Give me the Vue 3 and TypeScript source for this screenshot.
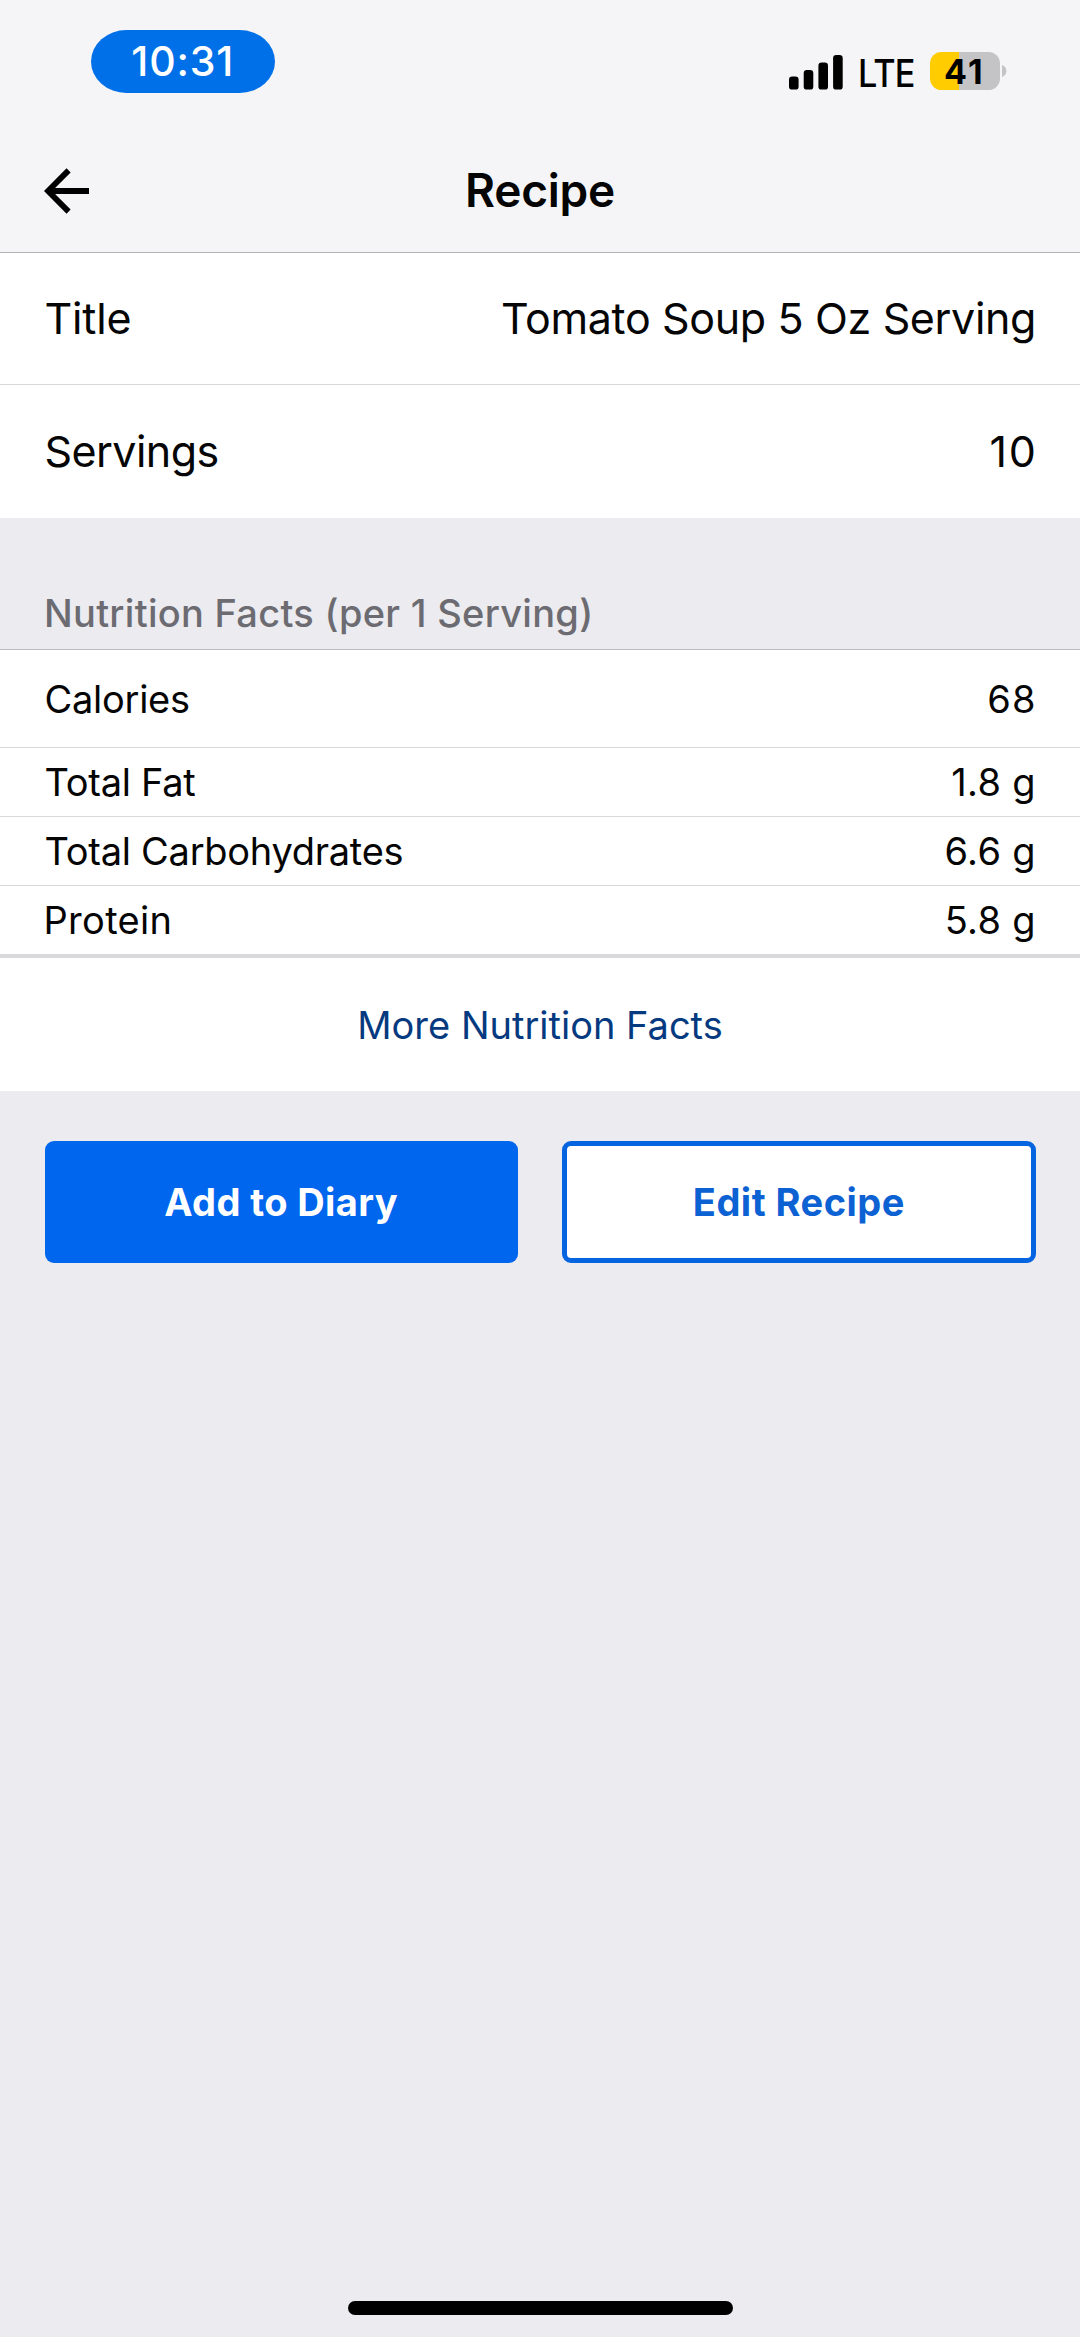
<script setup lang="ts">
interface Field {
  label: string
  value: string
  labelClass?: string
  valueClass?: string
}

const details: Field[] = [
  { label: 'Title', value: 'Tomato Soup 5 Oz Serving', labelClass: 'short' },
  { label: 'Servings', value: '10', valueClass: 'count' },
]

const nutrients: Field[] = [
  { label: 'Calories', value: '68', valueClass: 'count' },
  { label: 'Total Fat', value: '1.8 g' },
  { label: 'Total Carbohydrates', value: '6.6 g' },
  { label: 'Protein', value: '5.8 g', labelClass: 'wide' },
]
</script>

<template>
  <div class="screen">
    <header class="header">
      <div class="status">
        <div class="clock"><span>10:31</span></div>
        <div class="indicators">
          <svg class="signal" width="54" height="35" viewBox="0 0 54 35">
            <rect x="0" y="21.6" width="9.6" height="13" rx="3.2" />
            <rect x="14.7" y="15" width="9.6" height="19.6" rx="3.2" />
            <rect x="29.4" y="7.6" width="9.6" height="27" rx="3.2" />
            <rect x="44.1" y="0" width="9.6" height="34.6" rx="3.2" />
          </svg>
          <span class="network">LTE</span>
          <div class="battery"><span>41</span></div>
          <svg class="nub" width="5" height="12" viewBox="0 0 5 12">
            <path d="M0 0C2.7 1 4.4 3.2 4.4 6S2.7 11 0 12Z" fill="#c4c4c6" />
          </svg>
        </div>
      </div>
      <nav class="nav">
        <svg class="back" width="46" height="46" viewBox="0 0 46 46">
          <path d="M45 23H4M24.6 2.4L4 23L24.6 43.6" fill="none" stroke="#000" stroke-width="5.8" />
        </svg>
        <h1>Recipe</h1>
      </nav>
    </header>

    <main>
      <section class="details">
        <div v-for="f in details" :key="f.label" class="row">
          <span class="label" :class="f.labelClass">{{ f.label }}</span>
          <span class="value" :class="f.valueClass">{{ f.value }}</span>
        </div>
      </section>

      <h2>Nutrition Facts (per 1 Serving)</h2>

      <section class="nutrition">
        <div v-for="f in nutrients" :key="f.label" class="row">
          <span class="label" :class="f.labelClass">{{ f.label }}</span>
          <span class="value" :class="f.valueClass">{{ f.value }}</span>
        </div>
        <a class="more">More Nutrition Facts</a>
      </section>

      <div class="actions">
        <button class="primary">Add to Diary</button>
        <button class="secondary">Edit Recipe</button>
      </div>
    </main>

    <div class="home"></div>
  </div>
</template>

<style>
body {
  margin: 0;
  background: #ebebf0;
}
</style>

<style scoped>
.screen {
  box-sizing: border-box;
  display: flex;
  flex-direction: column;
  width: 1080px;
  height: 2337px;
  padding-bottom: 22px;
  overflow: hidden;
  background: #ebebf0;
  color: #050505;
  font-family: Inter, "Liberation Sans", sans-serif;
  white-space: nowrap;
}

.header {
  box-sizing: border-box;
  height: 253px;
  background: #f5f5f8;
  border-bottom: 1px solid #b3b3b6;
}

.status {
  display: flex;
  justify-content: space-between;
  align-items: flex-start;
  height: 129px;
  box-sizing: border-box;
  padding: 29.5px 73px 0 90.5px;
}

.clock {
  display: flex;
  justify-content: center;
  align-items: center;
  width: 184.5px;
  height: 63.5px;
  border-radius: 36px / 32px;
  background: #0070e8;
  color: #fff;
  font-size: 41px;
  font-weight: 500;
  letter-spacing: 0.85px;
}

.indicators {
  display: flex;
  align-items: center;
  height: 38px;
  margin-top: 22.5px;
}

.signal {
  display: block;
  margin-top: 3px;
}

.network {
  width: 66px;
  margin-left: 14.5px;
  color: #000;
  font-size: 38px;
  font-weight: 500;
  line-height: 38px;
  letter-spacing: -1px;
  transform: scaleX(0.9);
  transform-origin: left center;
  margin-top: 4px;
}

.battery {
  display: flex;
  align-items: center;
  justify-content: center;
  width: 70px;
  height: 38px;
  margin-left: 6px;
  border-radius: 11.5px;
  background: linear-gradient(to right, #ffcc00 0 29px, #c4c4c6 29px);
  color: #000;
  font-size: 34px;
  font-weight: 700;
  letter-spacing: 2.2px;
}

.nub {
  display: block;
  margin-left: 2.5px;
}

.nav {
  display: grid;
  grid-template-columns: 46px 1fr 46px;
  align-items: center;
  height: 123px;
  padding: 0 44px;
}

.back {
  display: block;
}

h1 {
  margin: 0 0 2px;
  color: #050505;
  font-size: 46px;
  font-weight: 600;
  line-height: 56px;
  letter-spacing: -0.23px;
  text-align: center;
}

.row {
  box-sizing: border-box;
  display: flex;
  align-items: center;
  justify-content: space-between;
  padding: 0 44px 0 44.5px;
}

.details,
.nutrition {
  background: #fff;
}

.details .row {
  height: 133px;
  padding-bottom: 2px;
  font-size: 43px;
  letter-spacing: -0.36px;
}

.details .row:first-child {
  height: 132px;
  border-bottom: 1px solid #d7d7da;
}

.details .label {
  letter-spacing: -0.55px;
}

.details .label.short {
  letter-spacing: -0.16px;
}

.details .value.count {
  letter-spacing: 2px;
  margin-right: -2px;
}

h2 {
  box-sizing: border-box;
  height: 132px;
  margin: 0;
  padding: 72px 44px 0 44px;
  border-bottom: 1px solid #bcbbc2;
  color: #6c6b71;
  font-size: 38px;
  font-weight: 500;
  line-height: 46px;
  letter-spacing: 0.28px;
}

.nutrition .row {
  height: 69px;
  border-bottom: 1px solid #d9d9dc;
  font-size: 38px;
}

.nutrition .row:first-child {
  height: 98px;
}

.nutrition .row:nth-child(4) {
  height: 72px;
  border-bottom: 4px solid #d9d9db;
}

.nutrition .label {
  letter-spacing: -0.27px;
}

.nutrition .label.wide {
  margin-left: -1px;
  letter-spacing: 0.3px;
}

.nutrition .value {
  letter-spacing: 0.34px;
}

.nutrition .value.count {
  margin-right: -1px;
  letter-spacing: 1.4px;
}

.more {
  display: flex;
  align-items: center;
  justify-content: center;
  height: 133px;
  color: #063a80;
  font-size: 38px;
}

.actions {
  display: grid;
  grid-template-columns: 1fr 1fr;
  gap: 44.5px;
  padding: 50px 44.5px 0;
}

button {
  box-sizing: border-box;
  height: 121.5px;
  margin: 0;
  padding: 0;
  border: 0;
  border-radius: 9px;
  font: 700 38px Inter, "Liberation Sans", sans-serif;
}

.primary {
  background: #0066ee;
  color: #fff;
  letter-spacing: 0.4px;
}

.secondary {
  border: 5.5px solid #0565e0;
  background: #fff;
  color: #0c61d3;
  letter-spacing: 0.5px;
}

.home {
  width: 385px;
  height: 14px;
  margin: auto auto 0;
  border-radius: 7px;
  background: #000;
}
</style>
